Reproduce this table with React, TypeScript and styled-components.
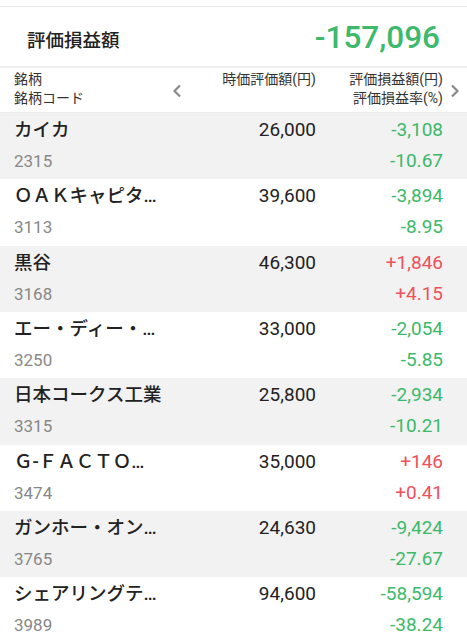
import React from "react";
import styled, { createGlobalStyle } from "styled-components";

const Global = createGlobalStyle`
  html, body { margin: 0; padding: 0; background: #fff; }
  body { font-family: Roboto, "Noto Sans CJK JP", sans-serif; -webkit-font-smoothing: antialiased; }
`;

const GREEN = "#3cb96b";
const RED = "#f0505a";

const Page = styled.div`
  width: 467px;
  height: 640px;
  overflow: hidden;
  background: #fff;
  padding-top: 6px;
  box-sizing: border-box;
`;

const Summary = styled.div`
  display: flex;
  align-items: center;
  justify-content: space-between;
  height: 59px;
  padding: 0 27px 0 27px;
  border-top: 1px solid #e9e9e9;
  border-bottom: 2px solid #efefef;
`;

const SummaryTitle = styled.div`
  font-family: Roboto, "Noto Sans CJK JP", sans-serif;
  font-size: 18.5px;
  font-weight: 500;
  color: #222;
  margin-top: 4px;
`;

const SummaryValue = styled.div`
  font-family: Roboto, "Noto Sans CJK JP", sans-serif;
  font-size: 31.5px;
  font-weight: 500;
  color: ${GREEN};
  margin-top: 2px;
`;

const Grid = styled.div`
  display: grid;
  grid-template-columns: 150px 26px 126px 127px 24px;
  padding-left: 14px;
  align-items: start;
`;

const HeadRow = styled(Grid)`
  height: 45px;
  border-bottom: 1px solid #ececec;
  box-sizing: border-box;
`;

const HeadText = styled.div<{ $right?: boolean }>`
  font-family: Roboto, "Noto Sans CJK JP", sans-serif;
  font-size: 14px;
  line-height: 19px;
  color: #333;
  padding-top: 2px;
  white-space: nowrap;
  text-align: ${(p) => (p.$right ? "right" : "left")};
`;

const Chevron = styled.div`
  display: flex;
  align-items: center;
  justify-content: center;
  height: 45px;
  color: #888;
`;

const Row = styled(Grid)<{ $shade: boolean }>`
  height: 66.33px;
  background: ${(p) => (p.$shade ? "#f2f2f2" : "#fff")};
  grid-template-rows: 33px 33px;
`;

const Name = styled.div`
  grid-column: 1 / 3;
  font-family: Roboto, "Noto Sans CJK JP", sans-serif;
  font-size: 18.5px;
  font-weight: 500;
  color: #222;
  line-height: 24px;
  padding-top: 5px;
  white-space: nowrap;
`;

const Code = styled.div`
  grid-column: 1 / 3;
  grid-row: 2;
  font-family: Roboto, sans-serif;
  font-size: 17px;
  color: #888;
  line-height: 24px;
  padding-top: 3px;
`;

const Value = styled.div`
  grid-column: 3;
  grid-row: 1;
  text-align: right;
  font-family: Roboto, sans-serif;
  font-size: 19px;
  color: #222;
  line-height: 24px;
  padding-top: 5px;
`;

const Change = styled.div<{ $up: boolean; $row: number }>`
  grid-column: 4;
  grid-row: ${(p) => p.$row};
  text-align: right;
  font-family: Roboto, sans-serif;
  font-size: 19px;
  color: ${(p) => (p.$up ? RED : GREEN)};
  line-height: 24px;
  padding-top: ${(p) => (p.$row === 1 ? "5px" : "3px")};
`;

const ChevronSvg = ({ dir }: { dir: "l" | "r" }) => (
  <svg width="10" height="14" viewBox="0 0 10 14">
    <path
      d={dir === "l" ? "M8 1.5 L2.5 7 L8 12.5" : "M2 1.5 L7.5 7 L2 12.5"}
      fill="none"
      stroke="#8a8a8a"
      strokeWidth="2.2"
    />
  </svg>
);

const rows = [
  { name: "カイカ", code: "2315", value: "26,000", pl: "-3,108", pct: "-10.67" },
  { name: "ＯＡＫキャピタ…", code: "3113", value: "39,600", pl: "-3,894", pct: "-8.95" },
  { name: "黒谷", code: "3168", value: "46,300", pl: "+1,846", pct: "+4.15" },
  { name: "エー・ディー・…", code: "3250", value: "33,000", pl: "-2,054", pct: "-5.85" },
  { name: "日本コークス工業", code: "3315", value: "25,800", pl: "-2,934", pct: "-10.21" },
  { name: "Ｇ-ＦＡＣＴＯ…", code: "3474", value: "35,000", pl: "+146", pct: "+0.41" },
  { name: "ガンホー・オン…", code: "3765", value: "24,630", pl: "-9,424", pct: "-27.67" },
  { name: "シェアリングテ…", code: "3989", value: "94,600", pl: "-58,594", pct: "-38.24" },
];

export default function App() {
  return (
    <Page>
      <Global />
      <Summary>
        <SummaryTitle>評価損益額</SummaryTitle>
        <SummaryValue>-157,096</SummaryValue>
      </Summary>
      <HeadRow>
        <HeadText>
          銘柄
          <br />
          銘柄コード
        </HeadText>
        <Chevron>
          <ChevronSvg dir="l" />
        </Chevron>
        <HeadText $right>時価評価額(円)</HeadText>
        <HeadText $right>
          評価損益額(円)
          <br />
          評価損益率(%)
        </HeadText>
        <Chevron>
          <ChevronSvg dir="r" />
        </Chevron>
      </HeadRow>
      {rows.map((r, i) => {
        const up = r.pl.startsWith("+");
        return (
          <Row key={r.code} $shade={i % 2 === 0}>
            <Name>{r.name}</Name>
            <Value>{r.value}</Value>
            <Change $up={up} $row={1}>{r.pl}</Change>
            <Code>{r.code}</Code>
            <Change $up={up} $row={2}>{r.pct}</Change>
          </Row>
        );
      })}
    </Page>
  );
}
